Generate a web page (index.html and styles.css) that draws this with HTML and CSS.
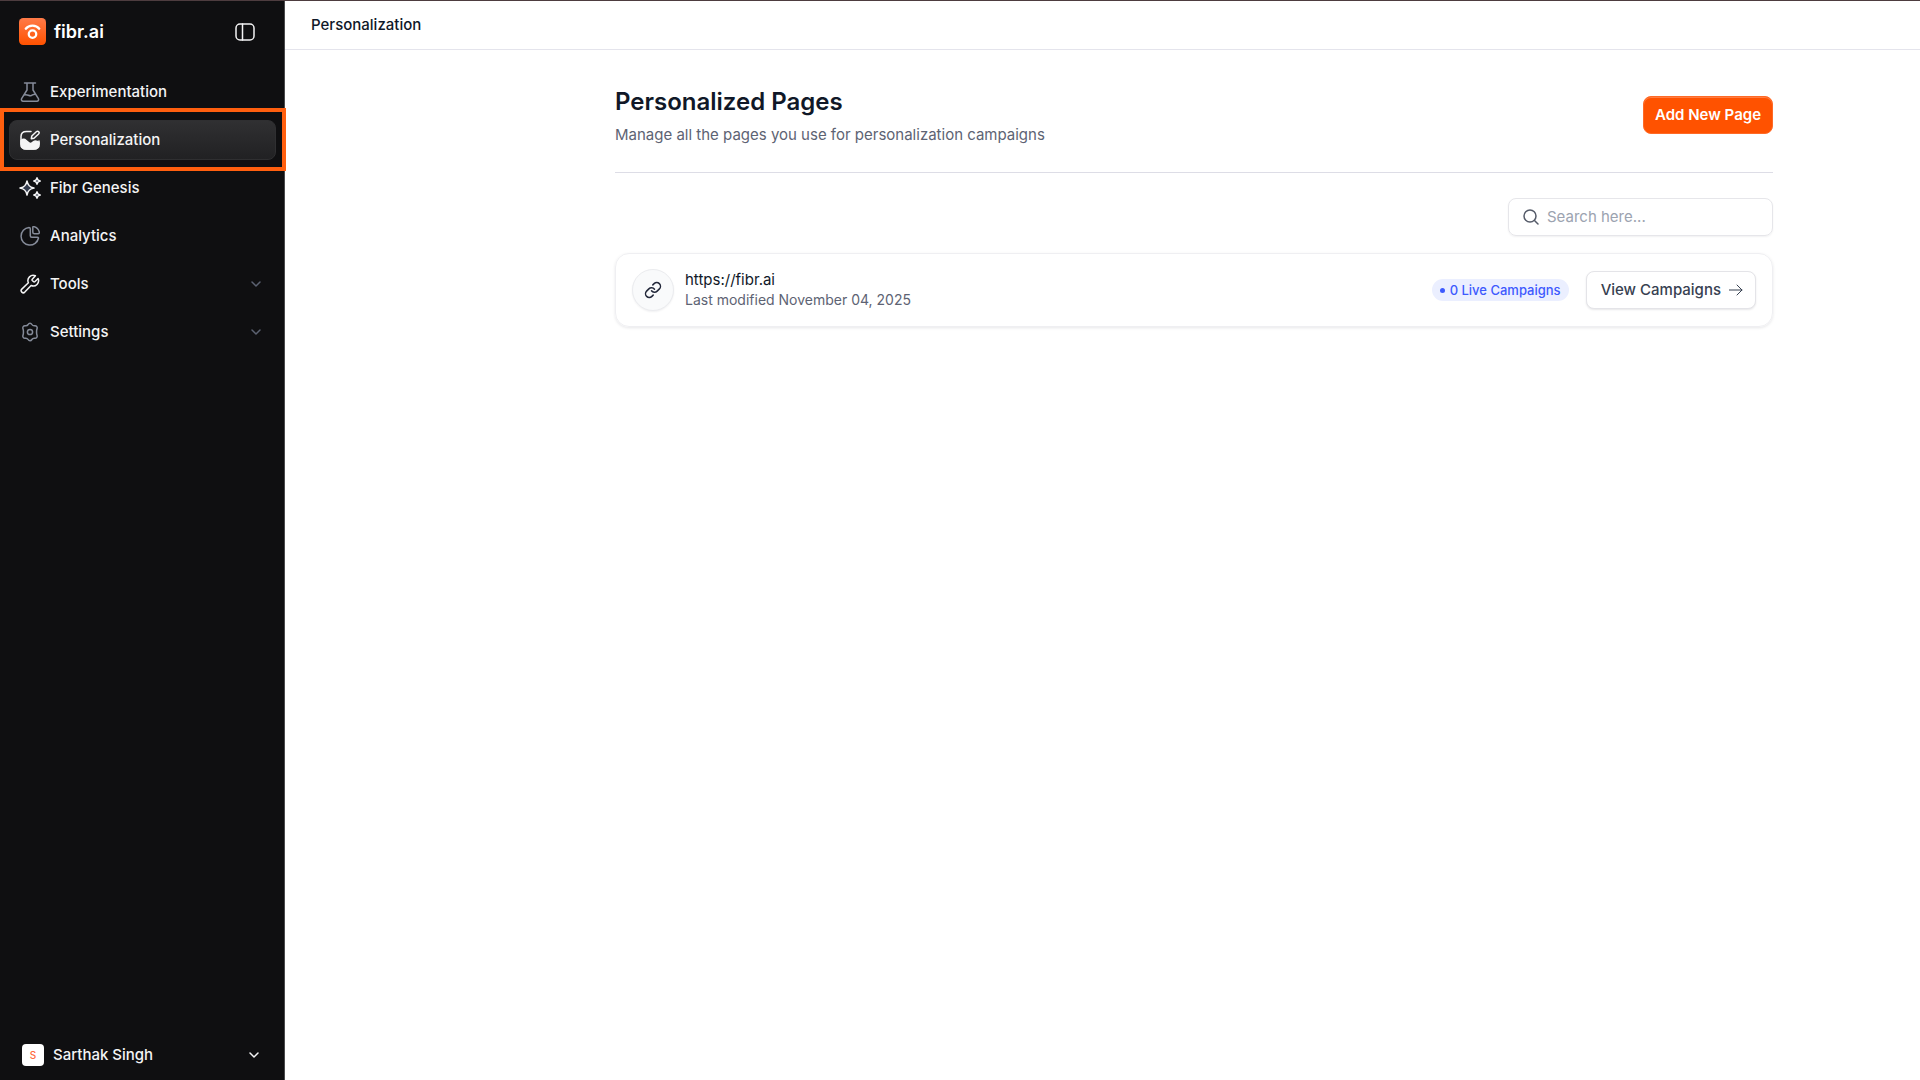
FILE: index.html
```html
<!DOCTYPE html>
<html lang="en">
<head>
  <meta charset="UTF-8">
  <meta name="viewport" content="width=device-width, initial-scale=1.0">
  <title>Personalization</title>
  <link rel="stylesheet" href="styles.css">
</head>
<body>
  <aside class="sidebar">
    <div class="brand">
      <a href="#" class="brand-link">
        <svg class="logo" viewBox="0 0 26 26" fill="none">
          <defs>
            <linearGradient id="logoFill" x1="0" y1="0" x2="0" y2="1">
              <stop offset="0" stop-color="#ff7a48"/>
              <stop offset="1" stop-color="#ff5200"/>
            </linearGradient>
          </defs>
          <rect width="26" height="26" rx="4" fill="url(#logoFill)"/>
          <path d="M6.500 10.300C8 8.300 10.300 7.300 13 7.300s5 1 6.500 3" stroke="#fff" stroke-width="2.200"/>
          <circle cx="13" cy="15.500" r="3.600" stroke="#fff" stroke-width="2.200"/>
        </svg>
        <span>fibr.ai</span>
      </a>
      <button class="collapse" aria-label="Collapse sidebar">
        <svg width="20" height="18" viewBox="0 0 20 18">
          <rect x="1" y="1" width="18" height="16" rx="4"/>
          <path d="M7.500 1v16"/>
        </svg>
      </button>
    </div>

    <nav class="nav">
      <a href="#" class="nav-item">
        <svg class="icon muted" viewBox="0 0 20 20">
          <path d="M4.500 1h11M7 1v7L1.600 16.600C1 17.800 1.700 19.200 3 19.200h14c1.300 0 2-1.400 1.400-2.600L13 8V1M4 13.200c3-1.500 4.500.8 6.500.6s2.500-2 5-1.600"/>
        </svg>
        Experimentation
      </a>
      <a href="#" class="nav-item active">
        <svg class="icon" viewBox="0 0 20 20">
          <path d="M11 1.500H6.500C3 1.500 1 3.500 1 6.500V14c0 3 2 5 5.500 5h7c3.500 0 5.500-2 5.500-5v-3"/>
          <path d="M1 10.500c1.500-1.300 3.500-1.500 5-.2 2 1.600 2.500 3.200 4.500 3.200s2.500-2.500 4.700-2.500c1.500 0 2.800.5 3.800 1.500V14c0 3-2 5-5.500 5h-7C3 19 1 17 1 14z" fill="currentColor"/>
          <path d="M11.300 8.700l.5-2.700 4.500-4.300c.8-.7 1.800-.7 2.400 0s.6 1.600-.1 2.300L14 8.200z"/>
        </svg>
        Personalization
      </a>
      <a href="#" class="nav-item">
        <svg class="icon wide" viewBox="0 0 22 22">
          <path class="star" d="M8 4c.9 4.500 2.500 6.200 7 7-4.500.9-6.100 2.500-7 7-.9-4.500-2.500-6.100-7-7 4.500-.8 6.100-2.500 7-7zM18 .8c.4 2 1.200 2.800 3.200 3.200-2 .4-2.800 1.200-3.200 3.200-.4-2-1.200-2.800-3.200-3.200 2-.4 2.800-1.200 3.200-3.200zM18 14.800c.4 2 1.200 2.800 3.200 3.200-2 .4-2.800 1.200-3.200 3.200-.4-2-1.200-2.800-3.200-3.200 2-.4 2.800-1.200 3.200-3.200z"/>
        </svg>
        Fibr Genesis
      </a>
      <a href="#" class="nav-item">
        <svg class="icon muted" viewBox="0 0 20 20">
          <path d="M9 1.500A8.800 8.800 0 1 0 18.500 12c-.2-.6-.7-.8-1.300-.8h-5.400c-1 0-1.500-.5-1.500-1.500V2.800c0-.8-.4-1.300-1.300-1.300z"/>
          <path d="M12.800 1.300c0-.5.500-.8 1-.7 2.900.7 4.700 2.600 5.500 5.400.2.900-.2 1.700-1.200 1.700h-3.700c-1 0-1.600-.6-1.600-1.500z"/>
        </svg>
        Analytics
      </a>
      <button class="nav-item">
        <svg class="icon" viewBox="0 0 20 20">
          <path d="M12.300 5.300a.9.9 0 0 0 0 1.200l1.300 1.300a.9.9 0 0 0 1.200 0l3.300-3.300a5.300 5.300 0 0 1-7 7l-6.300 6.600a2.100 2.100 0 0 1-3-3l6.600-6.300a5.300 5.300 0 0 1 7-7z"/>
        </svg>
        Tools
        <svg class="chevron" viewBox="0 0 10 10"><path d="M1 3l4 4 4-4"/></svg>
      </button>
      <button class="nav-item">
        <svg class="icon muted" viewBox="0 0 20 20">
          <path d="M8.100 2.500c.9-1.600 2.900-1.600 3.800 0 .7 1.200 1.500 1.500 2.800 1.300 1.900-.2 3 1.500 2.300 3.100-.6 1.300-.6 4.900 0 6.200.7 1.600-.4 3.300-2.300 3.100-1.300-.2-2.100.1-2.800 1.300-.9 1.600-2.900 1.600-3.800 0-.7-1.200-1.500-1.500-2.800-1.300-1.900.2-3-1.500-2.300-3.100.6-1.300.6-4.900 0-6.200C2.300 5.300 3.400 3.600 5.300 3.800c1.300.2 2.100-.1 2.800-1.300z"/>
          <circle cx="10" cy="10" r="2.600"/>
        </svg>
        Settings
        <svg class="chevron" viewBox="0 0 10 10"><path d="M1 3l4 4 4-4"/></svg>
      </button>
    </nav>

    <button class="account">
      <span class="avatar">S</span>
      Sarthak Singh
      <svg class="chevron" viewBox="0 0 10 10"><path d="M1 3l4 4 4-4"/></svg>
    </button>
  </aside>

  <div class="page">
    <header class="topbar">Personalization</header>
    <main class="content">
      <div class="heading">
        <div>
          <h1>Personalized Pages</h1>
          <p>Manage all the pages you use for personalization campaigns</p>
        </div>
        <button class="btn-primary">Add New Page</button>
      </div>

      <label class="search">
        <svg width="16" height="16" viewBox="0 0 16 16" aria-hidden="true">
          <circle cx="7" cy="7" r="6"/>
          <path d="M11.500 11.500L15 15"/>
        </svg>
        <input type="search" placeholder="Search here..." aria-label="Search pages">
      </label>

      <article class="card">
        <span class="link-icon">
          <svg width="18" height="18" viewBox="0 0 24 24">
            <path d="M10 13a5 5 0 0 0 7.540.54l3-3a5 5 0 0 0-7.070-7.070l-1.720 1.710"/>
            <path d="M14 11a5 5 0 0 0-7.540-.54l-3 3a5 5 0 0 0 7.070 7.070l1.710-1.710"/>
          </svg>
        </span>
        <div class="card-text">
          <div class="card-url">https://fibr.ai</div>
          <div class="card-date">Last modified November 04, 2025</div>
        </div>
        <span class="badge">0 Live Campaigns</span>
        <button class="btn-outline">
          View Campaigns
          <svg width="14" height="12" viewBox="0 0 14 12"><path d="M0 6h13M8 1l5 5-5 5"/></svg>
        </button>
      </article>
    </main>
  </div>
</body>
</html>
```
FILE: styles.css
```css
* {
  box-sizing: border-box;
}
body {
  margin: 0;
  min-height: 100vh;
  display: flex;
  border-top: 1px solid #4d3c3f;
  background: #fff;
  color: #101828;
  font-family: Inter, "Liberation Sans", sans-serif;
  font-size: 15px;
  line-height: 20px;
}
a {
  color: inherit;
  text-decoration: none;
}
button, input {
  font: inherit;
  color: inherit;
}
button {
  border: 0;
  padding: 0;
  background: none;
  cursor: pointer;
}
svg {
  flex: none;
  fill: none;
  stroke: currentColor;
  stroke-width: 1.5;
  stroke-linecap: round;
  stroke-linejoin: round;
}

/* sidebar */
.sidebar {
  flex: none;
  width: 285px;
  display: flex;
  flex-direction: column;
  background: #0f0f11;
  border-right: 1px solid #4a4a4c;
  color: #f4f4f5;
  font-weight: 500;
}
.brand {
  display: flex;
  align-items: center;
  justify-content: space-between;
  padding: 17px 29px 17px 19px;
}
.brand-link {
  display: flex;
  align-items: center;
  gap: 8px;
  color: #fff;
  font-size: 18px;
  font-weight: 600;
}
.logo {
  width: 27px;
  height: 27px;
  stroke: none;
}
.collapse {
  display: flex;
}
.nav {
  display: flex;
  flex-direction: column;
  gap: 8px;
  padding: 10px 8px 10px 9px;
}
.nav-item {
  display: flex;
  align-items: center;
  gap: 10px;
  height: 40px;
  padding: 0 14px 0 10px;
  border: 1px solid transparent;
  border-radius: 8px;
  text-align: left;
}
.nav-item.active {
  position: relative;
  background: linear-gradient(#303032, #212123);
  border-color: #2f2f31;
}
.nav-item.active::after {
  content: "";
  position: absolute;
  inset: -13px -11px -12px -10px;
  border: 4px solid #ff5f0f;
}
.icon {
  width: 20px;
  height: 20px;
}
.icon.wide {
  width: 22px;
  height: 22px;
  margin: 0 -1px;
}
.muted {
  color: #858b99;
}
.star {
  fill: #333b4d;
}
.chevron {
  width: 10px;
  height: 10px;
  margin-left: auto;
}
.nav-item .chevron {
  color: #5c6272;
}
.account {
  display: flex;
  align-items: center;
  gap: 9px;
  margin-top: auto;
  padding: 14px 25px 14px 22px;
  font-weight: 500;
}
.avatar {
  width: 22px;
  height: 22px;
  border-radius: 4px;
  background: #fff;
  color: #ff6a3c;
  font-size: 10px;
  line-height: 22px;
  text-align: center;
}

/* page */
.page {
  flex: 1;
  min-width: 0;
}
.topbar {
  padding: 14px 26px;
  border-bottom: 1px solid #e4e4ec;
  font-weight: 500;
}
.content {
  padding: 34px 147px 34px 330px;
}
.heading {
  display: flex;
  align-items: center;
  justify-content: space-between;
  padding-bottom: 27px;
  border-bottom: 1px solid #dddde6;
}
h1 {
  margin: 0 0 5px;
  font-size: 24px;
  line-height: 36px;
  font-weight: 600;
}
.heading p {
  margin: 0;
  color: #5d6373;
}
.btn-primary {
  height: 38px;
  padding: 0 11px;
  border: 1px solid #ff6a26;
  border-radius: 8px;
  background: #ff5200;
  box-shadow: inset 0 1px 0 #ff7c42;
  color: #fff;
  font-weight: 600;
}
.search {
  display: flex;
  align-items: center;
  gap: 8px;
  width: 265px;
  height: 38px;
  margin: 25px 0 17px auto;
  padding: 0 14px;
  border: 1px solid #e6e6ea;
  border-radius: 8px;
  box-shadow: 0 1px 2px rgba(16, 24, 40, 0.06);
  color: #555b69;
}
.search input {
  flex: 1;
  min-width: 0;
  padding: 0;
  border: 0;
  outline: 0;
  background: none;
}
.search input::placeholder {
  color: #9ca3b0;
}
.card {
  display: flex;
  align-items: center;
  padding: 15px 16px;
  border: 1px solid #efeff2;
  border-radius: 14px;
  box-shadow: 0 1px 3px rgba(16, 24, 40, 0.1);
}
.link-icon {
  display: flex;
  align-items: center;
  justify-content: center;
  width: 42px;
  height: 42px;
  border: 1px solid #ebecef;
  border-radius: 50%;
  background: #f9fafb;
  box-shadow: 0 1px 2px rgba(16, 24, 40, 0.06);
  color: #23283a;
}
.link-icon svg {
  stroke-width: 2;
}
.card-text {
  margin: 0 auto 0 11px;
}
.card-date {
  color: #5d6373;
  font-size: 14px;
}
.badge {
  display: flex;
  align-items: center;
  gap: 5px;
  height: 22px;
  margin-right: 17px;
  padding: 0 8px;
  border-radius: 11px;
  background: #ebefff;
  color: #3d5afe;
  font-size: 13px;
  font-weight: 500;
}
.badge::before {
  content: "";
  width: 5px;
  height: 5px;
  border-radius: 50%;
  background: currentColor;
}
.btn-outline {
  display: flex;
  align-items: center;
  gap: 8px;
  height: 38px;
  padding: 0 12px 0 14px;
  border: 1px solid #e4e4e8;
  border-radius: 8px;
  background: #fff;
  box-shadow: 0 1px 2px rgba(16, 24, 40, 0.1);
  color: #374151;
  font-weight: 500;
}
.btn-outline svg {
  stroke-width: 1;
}
```
